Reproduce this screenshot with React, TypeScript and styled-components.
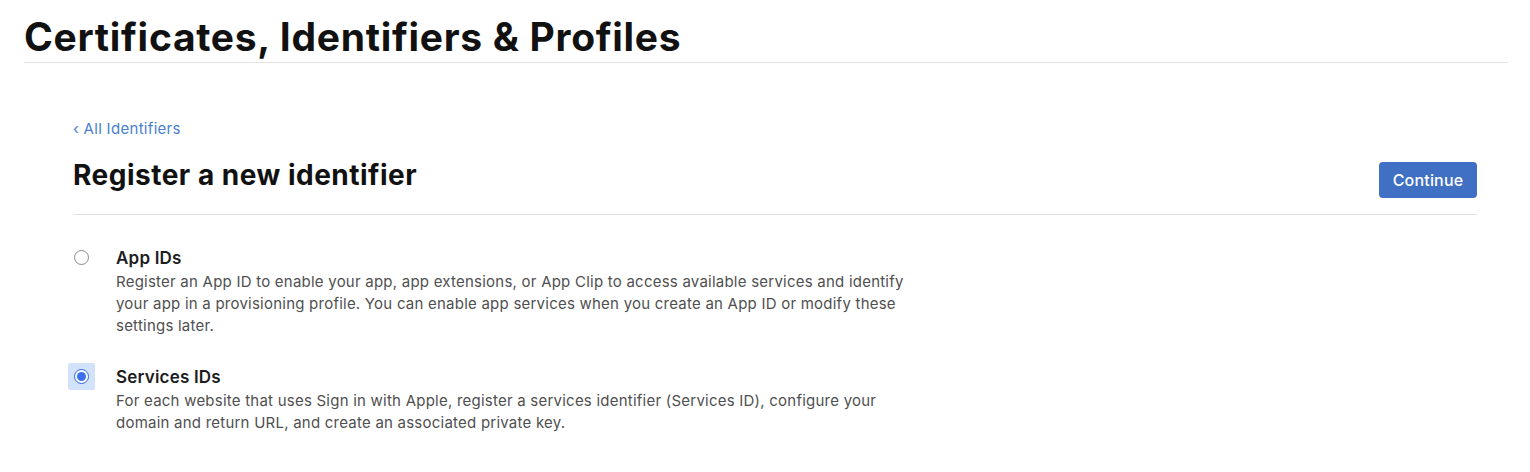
import React, { useState } from "react";
import styled, { createGlobalStyle } from "styled-components";

const Global = createGlobalStyle`
  html, body { margin: 0; padding: 0; background: #fff; }
  body { font-family: Inter, "Noto Sans", "Liberation Sans", sans-serif; color: #1d1d1f; -webkit-font-smoothing: antialiased; }
  * { box-sizing: border-box; }
`;

const Page = styled.div`
  width: 1530px;
  padding: 0 22px 0 24px;
`;

const Header = styled.header`
  border-bottom: 1px solid #e3e3e3;
  padding-top: 14px;
  height: 63px;
`;

const PageTitle = styled.h1`
  margin: 0;
  font-size: 39px;
  font-weight: 700;
  line-height: 46px;
  letter-spacing: 0.7px;
  color: #111;
`;

const Main = styled.main`
  padding: 55px 31px 0 49px;
`;

const BackLink = styled.a`
  display: inline-block;
  font-size: 15px;
  line-height: 20px;
  letter-spacing: 0.3px;
  color: #4a7fcf;
  text-decoration: none;
`;

const TitleRow = styled.div`
  display: flex;
  align-items: flex-start;
  justify-content: space-between;
  margin-top: 18px;
  padding-bottom: 16px;
  border-bottom: 1px solid #e1e1e1;
`;

const SectionTitle = styled.h2`
  margin: 0;
  font-size: 28px;
  font-weight: 700;
  line-height: 36px;
  letter-spacing: 0.5px;
  color: #111;
`;

const PrimaryButton = styled.button`
  width: 98px;
  height: 36px;
  margin-top: 5px;
  border: none;
  border-radius: 4px;
  background: #3f70c3;
  color: #fff;
  font-family: inherit;
  font-size: 16px;
  font-weight: 500;
  letter-spacing: 0.2px;
  cursor: pointer;
`;

const Options = styled.div`
  display: flex;
  flex-direction: column;
  gap: 29px;
  padding-top: 32px;
`;

const Option = styled.label`
  display: grid;
  grid-template-columns: 43px 800px;
  cursor: pointer;
`;

const RadioBox = styled.span<{ $focused: boolean }>`
  width: 27px;
  height: 27px;
  margin-left: -5px;
  margin-top: -3px;
  display: flex;
  align-items: center;
  justify-content: center;
  background: ${(p) => (p.$focused ? "#d3e2fb" : "transparent")};
  border-radius: 2px;
`;

const RadioCircle = styled.span<{ $checked: boolean }>`
  width: 15px;
  height: 15px;
  border-radius: 50%;
  border: 1px solid ${(p) => (p.$checked ? "#2c63e6" : "#8a8a8a")};
  background: #fff;
  display: flex;
  align-items: center;
  justify-content: center;
  &::after {
    content: "";
    width: 9px;
    height: 9px;
    border-radius: 50%;
    background: ${(p) => (p.$checked ? "#3b6ff0" : "transparent")};
  }
`;

const OptionText = styled.div`
  display: flex;
  flex-direction: column;
  gap: 2px;
`;

const OptionTitle = styled.span`
  font-size: 17px;
  font-weight: 600;
  line-height: 22px;
  letter-spacing: 0.2px;
  color: #1d1d1f;
`;

const OptionDesc = styled.p`
  margin: 0;
  font-size: 15px;
  line-height: 22px;
  letter-spacing: 0.23px;
  color: #505050;
`;

const options = [
  {
    id: "app",
    title: "App IDs",
    desc: "Register an App ID to enable your app, app extensions, or App Clip to access available services and identify your app in a provisioning profile. You can enable app services when you create an App ID or modify these settings later.",
  },
  {
    id: "services",
    title: "Services IDs",
    desc: "For each website that uses Sign in with Apple, register a services identifier (Services ID), configure your domain and return URL, and create an associated private key.",
  },
];

export default function App() {
  const [selected, setSelected] = useState("services");
  return (
    <>
      <Global />
      <Page>
        <Header>
          <PageTitle>Certificates, Identifiers &amp; Profiles</PageTitle>
        </Header>
        <Main>
          <BackLink href="#">‹ All Identifiers</BackLink>
          <TitleRow>
            <SectionTitle>Register a new identifier</SectionTitle>
            <PrimaryButton>Continue</PrimaryButton>
          </TitleRow>
          <Options>
            {options.map((o) => (
              <Option key={o.id} onClick={() => setSelected(o.id)}>
                <RadioBox $focused={selected === o.id}>
                  <RadioCircle $checked={selected === o.id} />
                </RadioBox>
                <OptionText>
                  <OptionTitle>{o.title}</OptionTitle>
                  <OptionDesc>{o.desc}</OptionDesc>
                </OptionText>
              </Option>
            ))}
          </Options>
        </Main>
      </Page>
    </>
  );
}
